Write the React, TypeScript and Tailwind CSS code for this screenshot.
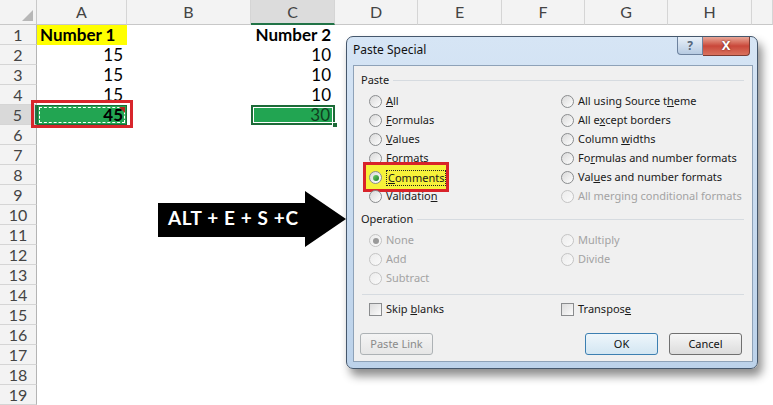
import type { ReactNode } from "react";

const colNames = ["A", "B", "C", "D", "E", "F", "G", "H", ""];

type Row = { n: number; a?: string; c?: string };

const rows: Row[] = [
  { n: 1, a: "Number 1", c: "Number 2" },
  { n: 2, a: "15", c: "10" },
  { n: 3, a: "15", c: "10" },
  { n: 4, a: "15", c: "10" },
  { n: 5, a: "45", c: "30" },
  ...Array.from({ length: 14 }, (_, i) => ({ n: i + 6 })),
];

function Radio({ checked, disabled }: { checked?: boolean; disabled?: boolean }) {
  return (
    <span
      className={`relative flex w-[13px] h-[13px] shrink-0 items-center justify-center rounded-full border bg-gradient-to-br ${
        disabled
          ? "border-[#c4c4c4] from-[#ececec] to-[#fafafa]"
          : "border-[#8a8c8e] from-[#d9d9d9] to-[#ffffff]"
      }`}
    >
      {checked && (
        <span
          className={`w-[6px] h-[6px] rounded-full ${
            disabled ? "bg-[#9a9a9a]" : "bg-gradient-to-br from-[#6fd36b] to-[#1c7d2a]"
          }`}
        />
      )}
    </span>
  );
}

function Check() {
  return (
    <span className="w-[13px] h-[13px] shrink-0 border border-[#8a8c8e] bg-gradient-to-br from-[#dcdcdc] to-[#fbfbfb]" />
  );
}

function Option({
  label,
  checked,
  disabled,
}: {
  label: ReactNode;
  checked?: boolean;
  disabled?: boolean;
}) {
  return (
    <div className="flex items-center gap-[4px] h-[19px]">
      <Radio checked={checked} disabled={disabled} />
      <span className={disabled ? "text-[#a3a3a3]" : "text-[#1a1a1a]"}>{label}</span>
    </div>
  );
}

function GroupHead({ title }: { title: string }) {
  return (
    <div className="flex items-center h-[16px] pl-[7px] pr-[8px] gap-[4px]">
      <span className="text-[#1a1a1a]">{title}</span>
      <div className="flex-1 border-t border-[#d6dbe0]" />
    </div>
  );
}

function Btn({ children, kind }: { children: ReactNode; kind?: "off" | "default" }) {
  const look =
    kind === "off"
      ? "border-[#adb2b5] from-[#f4f4f4] to-[#e6e6e6] text-[#8a8a8a]"
      : kind === "default"
        ? "border-[#3c7fb1] from-[#eef6fb] to-[#d3e6f2] text-[#111]"
        : "border-[#707070] from-[#f6f6f6] to-[#dcdcdc] text-[#111]";
  return (
    <div
      className={`flex w-[73px] h-[22px] items-center justify-center rounded-[3px] border bg-gradient-to-b ${look}`}
    >
      {children}
    </div>
  );
}

function PasteSpecial() {
  return (
    <div className="absolute left-[346px] top-[36px] w-[412px] h-[333px] flex flex-col rounded-[7px] border border-[#45576c] bg-gradient-to-b from-[#d6e5f5] to-[#bcd2ea] shadow-[4px_7px_10px_rgba(0,0,0,0.45)] font-['Noto_Sans',sans-serif] text-[11px]">
      {/* title bar */}
      <div className="flex h-[28px] items-start">
        <span className="pl-[6px] pt-[4px] text-[12px] text-[#111]">Paste Special</span>
        <div className="ml-auto mr-[7px] flex">
          <div className="flex w-[26px] h-[18px] items-center justify-center rounded-bl-[4px] border border-t-0 border-[#6d829e] bg-gradient-to-b from-[#e9f0f8] to-[#b7cbe2] text-[12px] font-bold text-[#55667a]">
            ?
          </div>
          <div className="flex w-[47px] h-[19px] items-center justify-center rounded-br-[4px] border border-l-0 border-t-0 border-[#7a3b33] bg-gradient-to-b from-[#e8a697] via-[#c9473a] to-[#d9725e] text-[13px] font-bold text-white [text-shadow:0_0_2px_#5a1a12]">
            X
          </div>
        </div>
      </div>

      {/* body */}
      <div className="ml-[6px] w-[400px] h-[297px] flex flex-col border border-[#8ea2b8] bg-[#f0f0f0]">
        <div className="pt-[6px]">
          <GroupHead title="Paste" />
        </div>
        <div className="mt-[4px] grid grid-cols-[192px_1fr] pl-[15px]">
          <div className="flex flex-col">
            <Option label={<><span className="underline">A</span>ll</>} />
            <Option label={<><span className="underline">F</span>ormulas</>} />
            <Option label={<><span className="underline">V</span>alues</>} />
            <Option label={<>Forma<span className="underline">t</span>s</>} />
            <div className="relative">
              <div className="absolute -left-[6px] -top-[6px] w-[86px] h-[30px] border-[3px] border-[#d8232a] bg-[#f6f23a]" />
              <div className="relative flex items-center gap-[4px] h-[19px]">
                <Radio checked />
                <span className="border border-dotted border-[#222] px-[1px] leading-[14px] text-[#1a1a1a]">
                  <span className="underline">C</span>omments
                </span>
              </div>
            </div>
            <Option label={<>Validatio<span className="underline">n</span></>} />
          </div>
          <div className="flex flex-col">
            <Option label={<>All using Source t<span className="underline">h</span>eme</>} />
            <Option label={<>All e<span className="underline">x</span>cept borders</>} />
            <Option label={<>Column <span className="underline">w</span>idths</>} />
            <Option label={<>Fo<span className="underline">r</span>mulas and number formats</>} />
            <Option label={<>Val<span className="underline">u</span>es and number formats</>} />
            <Option disabled label="All merging conditional formats" />
          </div>
        </div>

        <div className="mt-[5px]">
          <GroupHead title="Operation" />
        </div>
        <div className="mt-[4px] grid grid-cols-[192px_1fr] pl-[15px]">
          <div className="flex flex-col">
            <Option disabled checked label="None" />
            <Option disabled label="Add" />
            <Option disabled label="Subtract" />
          </div>
          <div className="flex flex-col">
            <Option disabled label="Multiply" />
            <Option disabled label="Divide" />
          </div>
        </div>

        <div className="mt-[6px] mx-[8px] border-t border-[#d6dbe0]" />

        <div className="mt-[5px] grid grid-cols-[192px_1fr] pl-[15px]">
          <div className="flex items-center gap-[4px] h-[19px]">
            <Check />
            <span className="text-[#1a1a1a]">
              Skip <span className="underline">b</span>lanks
            </span>
          </div>
          <div className="flex items-center gap-[4px] h-[19px]">
            <Check />
            <span className="text-[#1a1a1a]">
              Transpos<span className="underline">e</span>
            </span>
          </div>
        </div>

        <div className="mt-[14px] flex pl-[6px]">
          <Btn kind="off">Paste Link</Btn>
          <div className="ml-auto mr-[10px] flex gap-[11px]">
            <Btn kind="default">OK</Btn>
            <Btn>Cancel</Btn>
          </div>
        </div>
      </div>
    </div>
  );
}

function Arrow() {
  return (
    <div className="absolute left-[158px] top-[191px] w-[188px] h-[56px]">
      <svg className="absolute inset-0" width="188" height="56" viewBox="0 0 188 56">
        <polygon points="0,12 147,12 147,0 188,28 147,56 147,46 0,46" fill="#000" />
      </svg>
      <span className="absolute left-[10px] top-[16px] text-[19px] leading-[22px] tracking-[0.6px] font-bold text-white font-['Lato',sans-serif]">
        ALT + E + S +C
      </span>
    </div>
  );
}

export default function App() {
  return (
    <div className="relative w-[773px] h-[405px] overflow-hidden bg-white font-['Lato',sans-serif] text-[17px] text-black">
      <div className="grid grid-cols-[37px_90px_124px_84px_83px_84px_83px_83px_84px_1fr]">
        {/* column headers */}
        <div className="relative h-[25px] bg-[#f3f3f3] border-r border-b border-[#c8c8c8]">
          <svg className="absolute right-[3px] bottom-[3px]" width="11" height="11" viewBox="0 0 11 11">
            <polygon points="11,0 11,11 0,11" fill="#b7b7b7" />
          </svg>
        </div>
        {colNames.map((c) => (
          <div
            key={c || "I"}
            className={`flex h-[25px] items-center justify-center text-[16px] text-[#444] border-r border-[#d5d5d5] ${
              c === "C"
                ? "bg-[#dcdcdc] border-b-2 border-b-[#217346]"
                : "bg-[#f3f3f3] border-b border-b-[#c8c8c8]"
            }`}
          >
            {c}
          </div>
        ))}

        {rows.map((r) => (
          <div key={r.n} className="contents">
            <div
              className={`flex h-[20px] items-center justify-center text-[16px] text-[#444] border-b border-[#d5d5d5] ${
                r.n === 5 ? "bg-[#d9d9d9] border-r-2 border-r-[#217346]" : "bg-[#f3f3f3] border-r border-r-[#b4b4b4]"
              }`}
            >
              {r.n}
            </div>

            {/* A */}
            {r.n === 1 ? (
              <div className="flex h-[20px] items-center bg-[#ffff00] pl-[3px] font-bold">{r.a}</div>
            ) : r.n === 5 ? (
              <div className="relative h-[20px]">
                <div className="absolute -left-[6px] -top-[5px] -right-[6px] -bottom-[3px] border-[3px] border-[#d8262c]" />
                <div className="absolute inset-0 flex items-center justify-end border border-[#1c6b38] bg-[#22a552] pr-[3px] font-bold">
                  <div className="absolute inset-[1px] border border-dashed border-white" />
                  <span className="relative">{r.a}</span>
                  {/* comment marker */}
                  <svg className="absolute right-[1px] top-[1px]" width="6" height="6" viewBox="0 0 6 6">
                    <polygon points="0,0 6,0 6,6" fill="#b3261e" />
                  </svg>
                </div>
              </div>
            ) : (
              <div className="flex h-[20px] items-center justify-end pr-[4px]">{r.a}</div>
            )}

            {/* B */}
            <div className="h-[20px]" />

            {/* C */}
            {r.n === 5 ? (
              <div className="relative h-[20px]">
                <div className="absolute inset-0 flex items-center justify-end border-2 border-[#1c6b38] bg-[#22a552] pr-[3px] text-[#103d1f]">
                  <div className="absolute inset-0 border border-white" />
                  <span className="relative">{r.c}</span>
                </div>
                <div className="absolute -right-[3px] -bottom-[3px] w-[6px] h-[6px] bg-[#1c6b38] border border-white" />
              </div>
            ) : (
              <div
                className={`flex h-[20px] items-center justify-end pr-[4px] ${r.n === 1 ? "font-bold pr-0" : ""}`}
              >
                {r.c}
              </div>
            )}

            {/* D..I */}
            <div className="h-[20px]" />
            <div className="h-[20px]" />
            <div className="h-[20px]" />
            <div className="h-[20px]" />
            <div className="h-[20px]" />
            <div className="h-[20px]" />
          </div>
        ))}
      </div>

      <Arrow />
      <PasteSpecial />
    </div>
  );
}
